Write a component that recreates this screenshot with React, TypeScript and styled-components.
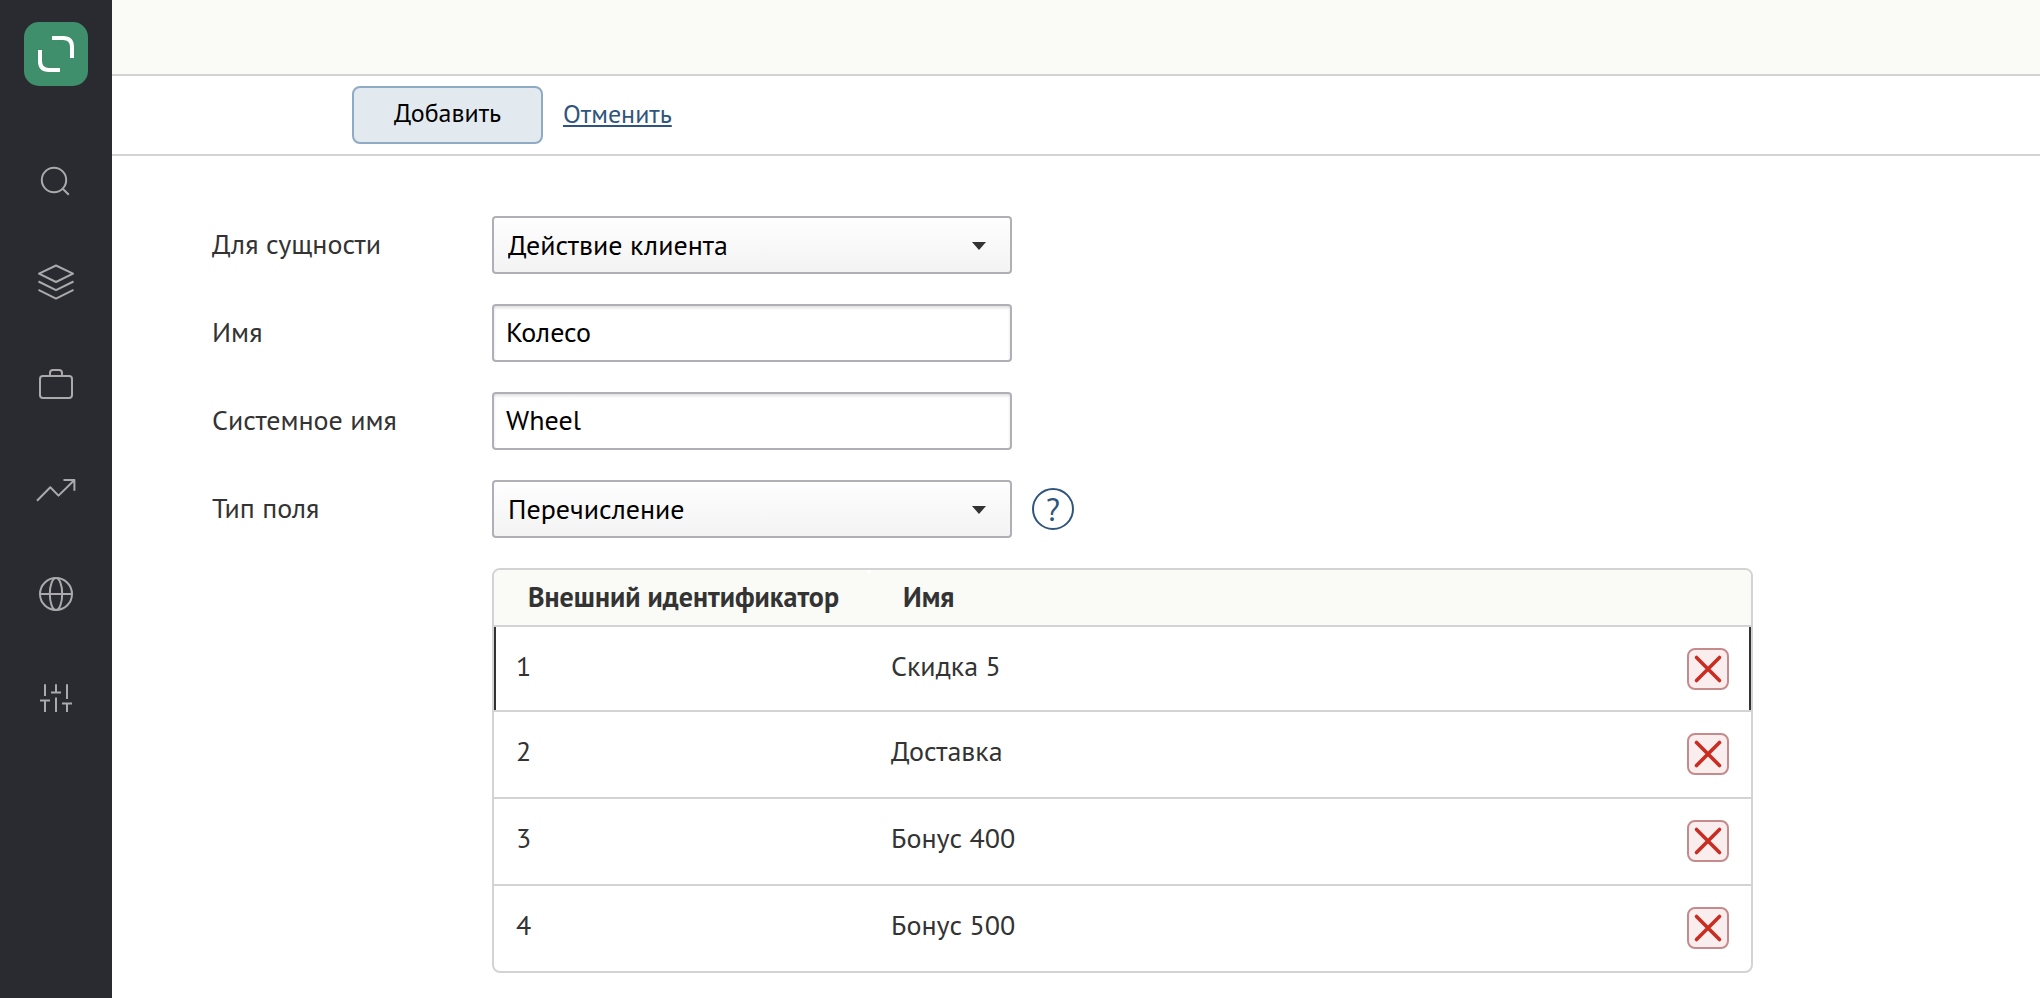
import React from "react";
import styled, { createGlobalStyle } from "styled-components";

const GlobalStyle = createGlobalStyle`
  *, *::before, *::after { box-sizing: border-box; }
  body {
    margin: 0;
    background: #fff;
    color: #333;
    font-family: "PT Sans", Lato, "Noto Sans", sans-serif;
    font-size: 28px;
    line-height: 36px;
  }
  button, input, select { font: inherit; }
`;

const Page = styled.div`
  display: flex;
  min-height: 100vh;
`;

const Sidebar = styled.nav`
  flex: none;
  display: flex;
  flex-direction: column;
  align-items: center;
  width: 112px;
  padding-top: 22px;
  background: #2a2b30;
`;

const LogoLink = styled.a`
  display: block;
  width: 64px;
  height: 64px;
  margin-bottom: 40px;
`;

const NavLink = styled.a`
  display: flex;
  align-items: center;
  justify-content: center;
  width: 100%;
  height: 104px;
  color: #aaaaac;

  svg {
    width: 48px;
    height: 48px;
    fill: none;
    stroke: currentColor;
    stroke-width: 2;
    stroke-linejoin: round;
  }
`;

const Main = styled.main`
  flex: 1;
  min-width: 0;
`;

const TopBar = styled.header`
  height: 76px;
  background: #fafbf6;
  border-bottom: 2px solid #d3d3d3;
`;

const Toolbar = styled.div`
  display: flex;
  align-items: center;
  gap: 20px;
  height: 80px;
  padding-left: 240px;
  border-bottom: 2px solid #d3d3d3;
`;

const SubmitButton = styled.button`
  width: 191px;
  height: 58px;
  padding: 0 0 4px;
  border: 2px solid #8fabc3;
  border-radius: 8px;
  background: #e2e9ef;
  color: #000;
  font-size: 26px;
`;

const CancelLink = styled.a`
  padding-bottom: 2px;
  color: #30557d;
  font-size: 26px;
  text-decoration: underline;
  text-decoration-thickness: 2px;
  text-underline-offset: 2px;
`;

const Form = styled.form`
  display: flex;
  flex-direction: column;
  gap: 30px;
  padding: 60px 100px 24px;
`;

const Row = styled.div`
  display: flex;
  align-items: center;
`;

const Label = styled.label`
  flex: none;
  width: 280px;
  padding-bottom: 2px;
`;

const Field = styled.div`
  position: relative;
  width: 520px;
`;

const TextInput = styled.input`
  display: block;
  width: 100%;
  height: 58px;
  padding: 0 12px 4px;
  border: 2px solid #afb0b5;
  border-radius: 4px;
  background: #fff;
  box-shadow: inset 0 2px 3px rgba(0, 0, 0, 0.12);
  color: #000;
`;

const Select = styled.select`
  display: block;
  width: 100%;
  height: 58px;
  padding: 0 60px 0 14px;
  border: 2px solid #afb0b5;
  border-radius: 4px;
  background: linear-gradient(#fefefe, #f3f3f3);
  color: #000;
  appearance: none;
`;

const Caret = styled.svg`
  position: absolute;
  top: 26px;
  right: 26px;
  width: 14px;
  height: 8px;
  fill: #333;
  pointer-events: none;
`;

const HelpButton = styled.button`
  display: flex;
  align-items: center;
  justify-content: center;
  width: 42px;
  height: 42px;
  margin-left: 20px;
  padding: 0;
  border: 2px solid #30557d;
  border-radius: 50%;
  background: none;
  color: #30557d;
  font-size: 32px;
`;

const TableFrame = styled.div`
  max-width: 1261px;
  margin-left: 280px;
  flex: 1;
  border: 2px solid #d3d3d3;
  border-radius: 8px;
  overflow: hidden;
`;

const Table = styled.table`
  width: 100%;
  border-collapse: separate;
  border-spacing: 0;
  table-layout: fixed;
`;

const HeadCell = styled.th<{ $width?: number }>`
  width: ${(p) => (p.$width ? `${p.$width}px` : "auto")};
  height: 57px;
  padding: 0 0 2px 34px;
  background: #fafbf6;
  border-bottom: 2px solid #d3d3d3;
  font-weight: 700;
  text-align: left;

  &:first-child { border-top-right-radius: 6px; }
  &:nth-child(2) { border-top-left-radius: 6px; }
`;

const Cell = styled.td`
  padding: 21px 0 0 22px;
  text-align: left;
  vertical-align: top;
`;

const ActionCell = styled.td`
  padding: 21px 22px 0 0;
  vertical-align: top;
`;

const BodyRow = styled.tr<{ $active?: boolean }>`
  height: ${(p) => (p.$active ? 85 : 87)}px;

  td { border-bottom: 2px solid #d3d3d3; }
  td:first-child { box-shadow: ${(p) => (p.$active ? "inset 2px 0 #333" : "none")}; }
  td:last-child { box-shadow: ${(p) => (p.$active ? "inset -2px 0 #333" : "none")}; }
  &:last-child { height: 85px; }
  &:last-child td { border-bottom: 0; }
`;

const DeleteButton = styled.button`
  display: block;
  width: 42px;
  height: 42px;
  margin-left: auto;
  padding: 0;
  border: 2px solid #c58a8c;
  border-radius: 8px;
  background: #faeded;

  svg {
    display: block;
    width: 38px;
    height: 38px;
    stroke: #c92d22;
    stroke-width: 3.6;
    stroke-linecap: round;
  }
`;

const navItems = [
  {
    label: "Поиск",
    icon: (
      <>
        <circle cx="22" cy="26" r="12.2" />
        <path d="M31 35 36.8 40.8" />
      </>
    ),
  },
  {
    label: "Слои",
    icon: (
      <path d="M24 7.5 41 15.7 24 24 7 15.7ZM6.5 23.5 24 32.2 41.5 23.5M6.5 31.8 24 40.6 41.5 31.8" />
    ),
  },
  {
    label: "Портфель",
    icon: (
      <>
        <rect x="8" y="14" width="32" height="22" rx="3" />
        <path d="M18 14V11Q18 8 21 8H27Q30 8 30 11V14" />
      </>
    ),
  },
  {
    label: "Отчёты",
    icon: <path d="M5 34.7 18.3 21.3 26.5 29.6 42.2 14.2M31.5 14H42.4V24.8" />,
  },
  {
    label: "Сайт",
    icon: (
      <>
        <circle cx="24" cy="24" r="16" />
        <ellipse cx="24" cy="24" rx="6.2" ry="16" />
        <path d="M8 24H40" />
      </>
    ),
  },
  {
    label: "Настройки",
    icon: (
      <path d="M13 10.3V22M13 27V38M8 26.5H18M24 10.3V18M19 18.5H29M24 23.5V38M35 10.3V25M35 30V38M30 29.5H40" />
    ),
  },
];

const options = [
  { id: "1", name: "Скидка 5" },
  { id: "2", name: "Доставка" },
  { id: "3", name: "Бонус 400" },
  { id: "4", name: "Бонус 500" },
];

function SelectField({ id, value }: { id: string; value: string }) {
  return (
    <Field>
      <Select id={id} defaultValue={value}>
        <option>{value}</option>
      </Select>
      <Caret viewBox="0 0 14 8" aria-hidden="true">
        <path d="M0 0H14L7 8Z" />
      </Caret>
    </Field>
  );
}

export default function App() {
  return (
    <Page>
      <GlobalStyle />
      <Sidebar>
        <LogoLink href="#" aria-label="Главная">
          <svg width="64" height="64" viewBox="0 0 64 64">
            <rect width="64" height="64" rx="15" fill="#3f8e6c" />
            <path
              d="M28 16H39Q48 16 48 25V36M16 28V39Q16 48 25 48H36"
              fill="none"
              stroke="#fff"
              strokeWidth="4"
            />
          </svg>
        </LogoLink>
        {navItems.map((item) => (
          <NavLink key={item.label} href="#" aria-label={item.label}>
            <svg viewBox="0 0 48 48">{item.icon}</svg>
          </NavLink>
        ))}
      </Sidebar>
      <Main>
        <TopBar />
        <Toolbar>
          <SubmitButton type="submit" form="field-form">
            Добавить
          </SubmitButton>
          <CancelLink href="#">Отменить</CancelLink>
        </Toolbar>
        <Form id="field-form" onSubmit={(e) => e.preventDefault()}>
          <Row>
            <Label htmlFor="entity">Для сущности</Label>
            <SelectField id="entity" value="Действие клиента" />
          </Row>
          <Row>
            <Label htmlFor="name">Имя</Label>
            <Field>
              <TextInput id="name" defaultValue="Колесо" />
            </Field>
          </Row>
          <Row>
            <Label htmlFor="system-name">Системное имя</Label>
            <Field>
              <TextInput id="system-name" defaultValue="Wheel" />
            </Field>
          </Row>
          <Row>
            <Label htmlFor="type">Тип поля</Label>
            <SelectField id="type" value="Перечисление" />
            <HelpButton type="button">?</HelpButton>
          </Row>
          <Row>
            <TableFrame>
              <Table>
                <thead>
                  <tr>
                    <HeadCell $width={375}>Внешний идентификатор</HeadCell>
                    <HeadCell>Имя</HeadCell>
                    <HeadCell $width={100} />
                  </tr>
                </thead>
                <tbody>
                  {options.map((option, index) => (
                    <BodyRow key={option.id} $active={index === 0}>
                      <Cell>{option.id}</Cell>
                      <Cell>{option.name}</Cell>
                      <ActionCell>
                        <DeleteButton type="button" aria-label={`Удалить ${option.name}`}>
                          <svg viewBox="0 0 38 38">
                            <path d="M7.5 7.5 30.5 30.5M30.5 7.5 7.5 30.5" />
                          </svg>
                        </DeleteButton>
                      </ActionCell>
                    </BodyRow>
                  ))}
                </tbody>
              </Table>
            </TableFrame>
          </Row>
        </Form>
      </Main>
    </Page>
  );
}
